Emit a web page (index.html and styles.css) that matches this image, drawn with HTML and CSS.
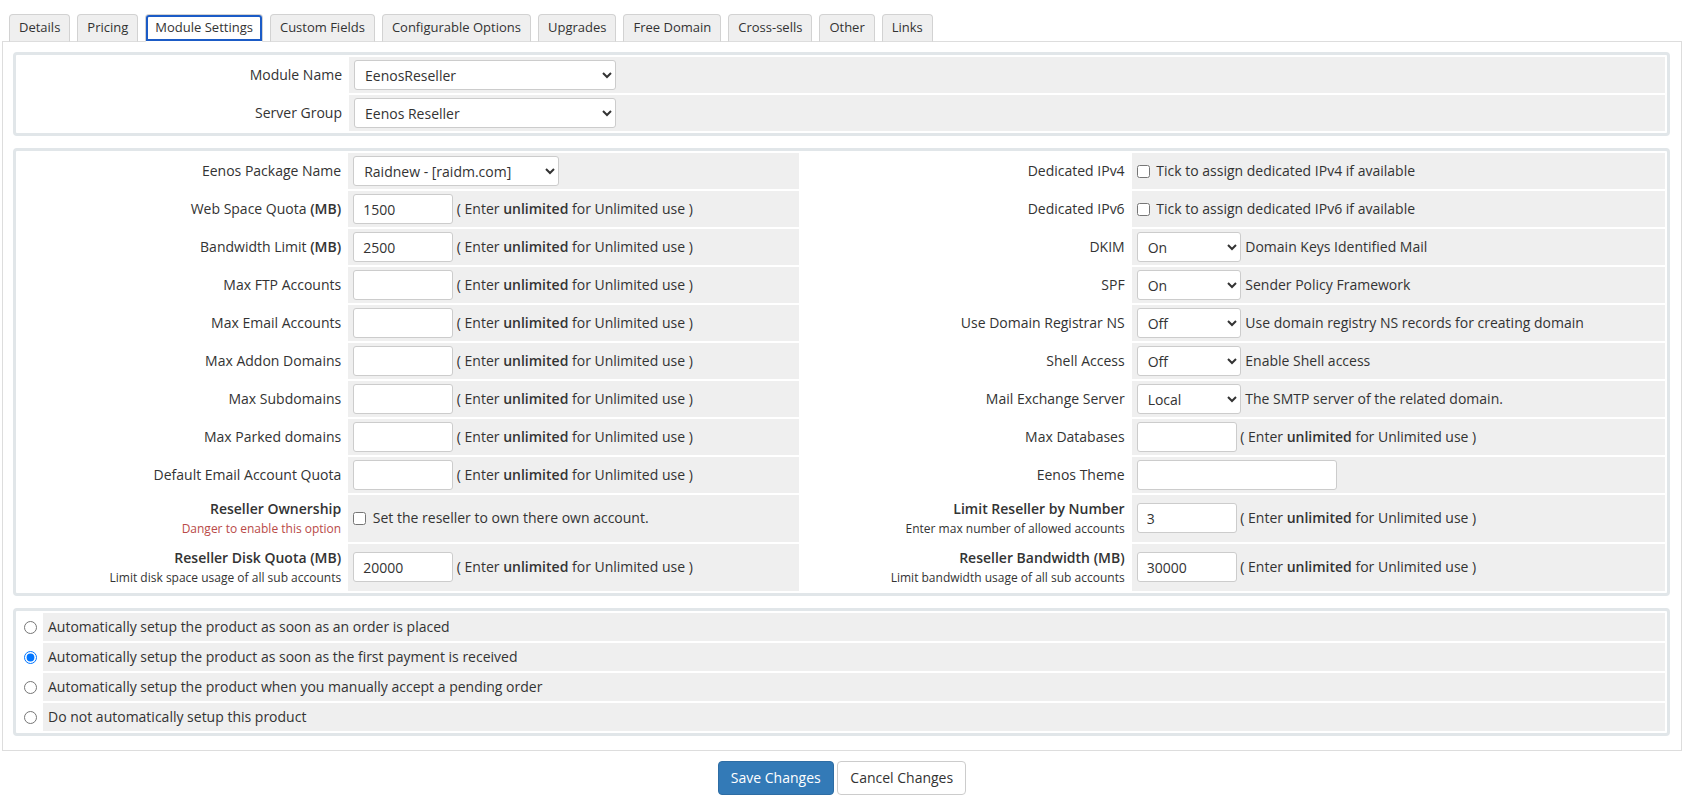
FILE: index.html
```html
<!DOCTYPE html>
<html lang="en">
<head>
    <meta charset="UTF-8">
    <meta name="viewport" content="width=device-width, initial-scale=1.0">
    <title>Module Settings</title>
    <link rel="stylesheet" href="styles.css">
</head>
<body>

<div class="page">
    <ul class="tabs">
        <li><a href="#">Details</a></li>
        <li><a href="#">Pricing</a></li>
        <li class="active"><a href="#">Module Settings</a></li>
        <li><a href="#">Custom Fields</a></li>
        <li><a href="#">Configurable Options</a></li>
        <li><a href="#">Upgrades</a></li>
        <li><a href="#">Free Domain</a></li>
        <li><a href="#">Cross-sells</a></li>
        <li><a href="#">Other</a></li>
        <li><a href="#">Links</a></li>
    </ul>

    <div class="tab-panel">
        <table class="form">
            <colgroup><col class="c-label"><col></colgroup>
            <tr>
                <td class="fieldlabel">Module Name</td>
                <td class="fieldarea">
                    <select class="w-lg"><option>EenosReseller</option></select>
                </td>
            </tr>
            <tr>
                <td class="fieldlabel">Server Group</td>
                <td class="fieldarea">
                    <select class="w-lg"><option>Eenos Reseller</option></select>
                </td>
            </tr>
        </table>

        <table class="form">
            <colgroup><col class="c-label"><col class="c-left"><col class="c-label"><col></colgroup>
            <tr>
                <td class="fieldlabel">Eenos Package Name</td>
                <td class="fieldarea"><select class="w-md"><option>Raidnew - [raidm.com]</option></select></td>
                <td class="fieldlabel">Dedicated IPv4</td>
                <td class="fieldarea"><label><input type="checkbox"> Tick to assign dedicated IPv4 if available</label></td>
            </tr>
            <tr>
                <td class="fieldlabel">Web Space Quota <b>(MB)</b></td>
                <td class="fieldarea"><input type="text" value="1500"> ( Enter <b>unlimited</b> for Unlimited use )</td>
                <td class="fieldlabel">Dedicated IPv6</td>
                <td class="fieldarea"><label><input type="checkbox"> Tick to assign dedicated IPv6 if available</label></td>
            </tr>
            <tr>
                <td class="fieldlabel">Bandwidth Limit <b>(MB)</b></td>
                <td class="fieldarea"><input type="text" value="2500"> ( Enter <b>unlimited</b> for Unlimited use )</td>
                <td class="fieldlabel">DKIM</td>
                <td class="fieldarea"><select class="w-sm"><option>On</option></select> Domain Keys Identified Mail</td>
            </tr>
            <tr>
                <td class="fieldlabel">Max FTP Accounts</td>
                <td class="fieldarea"><input type="text"> ( Enter <b>unlimited</b> for Unlimited use )</td>
                <td class="fieldlabel">SPF</td>
                <td class="fieldarea"><select class="w-sm"><option>On</option></select> Sender Policy Framework</td>
            </tr>
            <tr>
                <td class="fieldlabel">Max Email Accounts</td>
                <td class="fieldarea"><input type="text"> ( Enter <b>unlimited</b> for Unlimited use )</td>
                <td class="fieldlabel">Use Domain Registrar NS</td>
                <td class="fieldarea"><select class="w-sm"><option>Off</option></select> Use domain registry NS records for creating domain</td>
            </tr>
            <tr>
                <td class="fieldlabel">Max Addon Domains</td>
                <td class="fieldarea"><input type="text"> ( Enter <b>unlimited</b> for Unlimited use )</td>
                <td class="fieldlabel">Shell Access</td>
                <td class="fieldarea"><select class="w-sm"><option>Off</option></select> Enable Shell access</td>
            </tr>
            <tr>
                <td class="fieldlabel">Max Subdomains</td>
                <td class="fieldarea"><input type="text"> ( Enter <b>unlimited</b> for Unlimited use )</td>
                <td class="fieldlabel">Mail Exchange Server</td>
                <td class="fieldarea"><select class="w-sm"><option>Local</option></select> The SMTP server of the related domain.</td>
            </tr>
            <tr>
                <td class="fieldlabel">Max Parked domains</td>
                <td class="fieldarea"><input type="text"> ( Enter <b>unlimited</b> for Unlimited use )</td>
                <td class="fieldlabel">Max Databases</td>
                <td class="fieldarea"><input type="text"> ( Enter <b>unlimited</b> for Unlimited use )</td>
            </tr>
            <tr>
                <td class="fieldlabel">Default Email Account Quota</td>
                <td class="fieldarea"><input type="text"> ( Enter <b>unlimited</b> for Unlimited use )</td>
                <td class="fieldlabel">Eenos Theme</td>
                <td class="fieldarea"><input type="text" class="w-wide"></td>
            </tr>
            <tr class="tall">
                <td class="fieldlabel">
                    <strong>Reseller Ownership</strong>
                    <small class="danger">Danger to enable this option</small>
                </td>
                <td class="fieldarea"><label><input type="checkbox"> Set the reseller to own there own account.</label></td>
                <td class="fieldlabel">
                    <strong>Limit Reseller by Number</strong>
                    <small>Enter max number of allowed accounts</small>
                </td>
                <td class="fieldarea"><input type="text" value="3"> ( Enter <b>unlimited</b> for Unlimited use )</td>
            </tr>
            <tr class="tall">
                <td class="fieldlabel">
                    <strong>Reseller Disk Quota (MB)</strong>
                    <small>Limit disk space usage of all sub accounts</small>
                </td>
                <td class="fieldarea"><input type="text" value="20000"> ( Enter <b>unlimited</b> for Unlimited use )</td>
                <td class="fieldlabel">
                    <strong>Reseller Bandwidth (MB)</strong>
                    <small>Limit bandwidth usage of all sub accounts</small>
                </td>
                <td class="fieldarea"><input type="text" value="30000"> ( Enter <b>unlimited</b> for Unlimited use )</td>
            </tr>
        </table>

        <table class="form radios">
            <colgroup><col class="c-radio"><col></colgroup>
            <tr>
                <td class="radio-cell"><input type="radio" name="autosetup" id="as1"></td>
                <td class="fieldarea"><label for="as1">Automatically setup the product as soon as an order is placed</label></td>
            </tr>
            <tr>
                <td class="radio-cell"><input type="radio" name="autosetup" id="as2" checked></td>
                <td class="fieldarea"><label for="as2">Automatically setup the product as soon as the first payment is received</label></td>
            </tr>
            <tr>
                <td class="radio-cell"><input type="radio" name="autosetup" id="as3"></td>
                <td class="fieldarea"><label for="as3">Automatically setup the product when you manually accept a pending order</label></td>
            </tr>
            <tr>
                <td class="radio-cell"><input type="radio" name="autosetup" id="as4"></td>
                <td class="fieldarea"><label for="as4">Do not automatically setup this product</label></td>
            </tr>
        </table>
    </div>

    <div class="actions">
        <button type="submit" class="btn btn-primary">Save Changes</button>
        <button type="button" class="btn btn-default">Cancel Changes</button>
    </div>
</div>

</body>
</html>
```

FILE: styles.css
```css
body {
    margin: 0;
    font-family: "Open Sans", "Liberation Sans", Arial, sans-serif;
    font-size: 14px;
    color: #333;
    background: #fff;
}
b,
strong {
    font-weight: 600;
}
.page {
    padding: 14px 17px 0 2px;
}

/* tabs */
.tabs {
    display: flex;
    gap: 7px;
    list-style: none;
    margin: 0 0 -1px 0;
    padding: 0 0 0 7px;
    position: relative;
    z-index: 1;
    font-size: 13px;
}
.tabs a {
    display: block;
    height: 26px;
    line-height: 25px;
    padding: 0 9px;
    background: #efefef;
    border: 1px solid #d2d2d2;
    border-bottom-color: #ddd;
    border-radius: 4px 4px 0 0;
    color: #333;
    text-decoration: none;
}
.tabs .active a {
    background: #fff;
    border-bottom-color: #fff;
    outline: 2px solid #1b5bc6;
    outline-offset: -3px;
}

.tab-panel {
    border: 1px solid #ddd;
    padding: 10px 11px 2px 10px;
}

/* form tables */
.form {
    width: 100%;
    table-layout: fixed;
    border-collapse: separate;
    border-spacing: 2px;
    border: 3px solid #e1e6e9;
    border-radius: 4px;
    background: #fff;
    margin-bottom: 12px;
}
.form td {
    padding: 3px 5px;
    vertical-align: middle;
    line-height: 30px;
    white-space: nowrap;
}
.c-label {
    width: 20%;
}
.c-left {
    width: 27.5%;
}
.c-radio {
    width: 23px;
}
.fieldlabel {
    text-align: right;
    background: #fff;
}
.fieldarea {
    background: #efefef;
}
.fieldlabel strong {
    display: block;
    line-height: 22px;
}
.fieldlabel small {
    display: block;
    font-size: 12px;
    line-height: 18px;
}
.fieldlabel .danger {
    color: #b94a48;
}
.tall td {
    padding: 3px 5px 4px;
}

select,
input[type="text"] {
    box-sizing: border-box;
    height: 30px;
    font-family: inherit;
    font-size: 14px;
    color: #333;
    background: #fff;
    border: 1px solid #ccc;
    border-radius: 3px;
    vertical-align: top;
}
select {
    padding: 0 6px;
    margin-right: 1px;
}
input[type="text"] {
    width: 100px;
    padding: 5px 9px;
}
.w-lg {
    width: 262px;
}
.w-md {
    width: 206px;
}
.w-sm {
    width: 104px;
}
input.w-wide {
    width: 200px;
}
input[type="checkbox"] {
    margin: 0 3px 0 0;
    vertical-align: -2px;
}

/* auto setup radios */
.radios td {
    padding: 4px 5px;
    line-height: 20px;
}
.radios .radio-cell {
    padding: 4px 3px;
}
input[type="radio"] {
    margin: 0 0 0 3px;
    vertical-align: -2px;
}

/* buttons */
.actions {
    text-align: center;
    margin-top: 10px;
}
.btn {
    height: 34px;
    padding: 6px 12px;
    font-family: inherit;
    font-size: 14px;
    line-height: 20px;
    border: 1px solid #ccc;
    border-radius: 4px;
    cursor: pointer;
}
.btn-primary {
    background-color: #337ab7;
    border-color: #2e6da4;
    color: #fff;
}
.btn-default {
    background-color: #fff;
    color: #333;
}
```
